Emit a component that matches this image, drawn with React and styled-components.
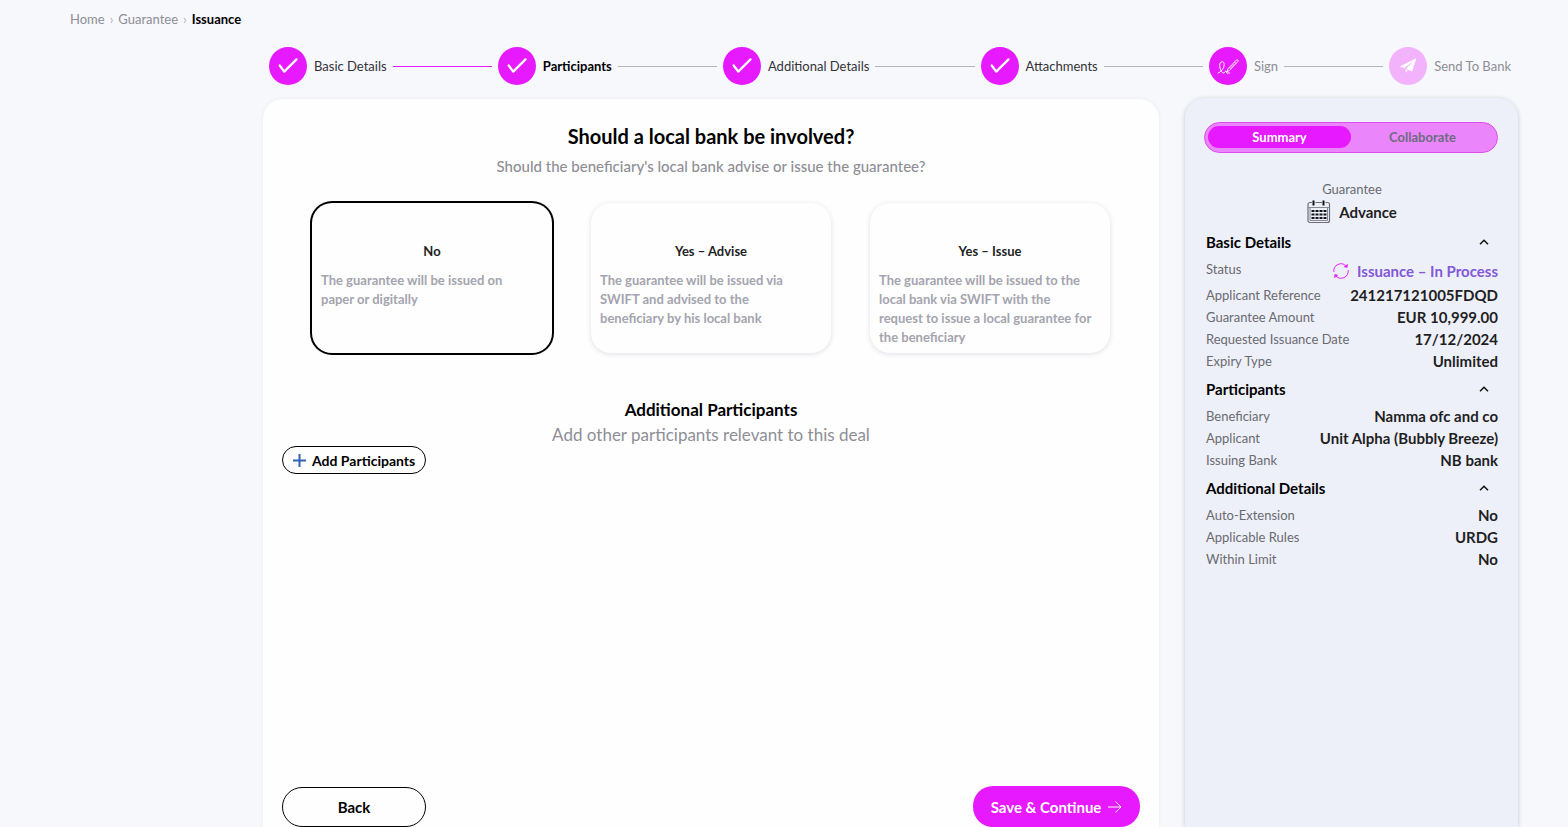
import React, { useState } from "react";
import styled, { createGlobalStyle, css } from "styled-components";

const STEPS = [
  { label: "Basic Details", icon: "check", state: "done" },
  { label: "Participants", icon: "check", state: "current" },
  { label: "Additional Details", icon: "check", state: "open" },
  { label: "Attachments", icon: "check", state: "open" },
  { label: "Sign", icon: "sign", state: "muted" },
  { label: "Send To Bank", icon: "send", state: "disabled" },
];

const OPTIONS = [
  { id: "no", title: "No", text: "The guarantee will be issued on paper or digitally" },
  {
    id: "advise",
    title: "Yes – Advise",
    text: "The guarantee will be issued via SWIFT and advised to the beneficiary by his local bank",
  },
  {
    id: "issue",
    title: "Yes – Issue",
    text: "The guarantee will be issued to the local bank via SWIFT with the request to issue a local guarantee for the beneficiary",
  },
];

const SECTIONS = [
  {
    title: "Basic Details",
    rows: [
      { label: "Status", value: "Issuance – In Process", status: true },
      { label: "Applicant Reference", value: "241217121005FDQD" },
      { label: "Guarantee Amount", value: "EUR 10,999.00" },
      { label: "Requested Issuance Date", value: "17/12/2024" },
      { label: "Expiry Type", value: "Unlimited" },
    ],
  },
  {
    title: "Participants",
    rows: [
      { label: "Beneficiary", value: "Namma ofc and co" },
      { label: "Applicant", value: "Unit Alpha (Bubbly Breeze)" },
      { label: "Issuing Bank", value: "NB bank" },
    ],
  },
  {
    title: "Additional Details",
    rows: [
      { label: "Auto-Extension", value: "No" },
      { label: "Applicable Rules", value: "URDG" },
      { label: "Within Limit", value: "No" },
    ],
  },
];

const StepIcon = ({ name }) => (
  <svg width="38" height="38" viewBox="0 0 38 38" fill="none" stroke="#ffffff" aria-hidden="true">
    {name === "check" && (
      <path d="M10.700 18.500 15.200 24.600 27.500 12.400" strokeWidth="2.300" strokeLinecap="round" strokeLinejoin="round" />
    )}
    {name === "sign" && (
      <g strokeLinecap="round" strokeLinejoin="round">
        <path d="M9.200 26c2.800-.8 6-5 6-8.400 0-1.800-.7-2.800-2-2.800-1.700 0-2.500 1.600-2.500 3.600 0 3 1.800 7.600 4 7.600 1.300 0 1.300-2 2.100-2 .7 0 .3 2 1.300 2h2.400" />
        <path d="m18 24.700.8-2.700 8.700-9c.8-.8 2.200.5 1.500 1.400L20.500 23.500 18 24.700Z" strokeWidth="0.900" />
        <path d="m25.600 14.900 1.500 1.400M21 21.600l4.500-4.700" strokeWidth="0.700" />
      </g>
    )}
    {name === "send" && (
      <g fill="#ffffff" stroke="none">
        <path d="M27.300 11.200 10.700 19.600l4.700 1.500 9.200-7.300-7.700 8.100 6.200 2.500Z" />
        <path d="m16.200 22.600 2.400 1-1.500 2.200Z" />
      </g>
    )}
  </svg>
);

const CalendarIcon = () => (
  <svg width="24" height="24" viewBox="0 0 24 24" fill="none" aria-hidden="true">
    <rect x="1" y="2.500" width="21.500" height="20" rx="2" stroke="#6f6d7c" strokeWidth="1.200" />
    <path d="M1 7.500h21.500M3 20.500h17.500M3 8v12.500M20.500 8v12.500" stroke="#8a8996" />
    <path d="M5 2.500h3.500M15 2.500h3.500" stroke="#eef0f9" strokeWidth="2" />
    <path d="M6.500.5v5M16.500.5v5" stroke="#111111" strokeWidth="2" />
    <path d="M4.500 11h15M4.500 14.500h15M4.500 18h15" stroke="#16151f" strokeWidth="2" strokeDasharray="3 1" />
  </svg>
);

const StatusIcon = () => (
  <svg width="16" height="16" viewBox="0 0 16 16" fill="none" stroke="#e619ff" strokeLinecap="round" aria-hidden="true">
    <path d="M.8 8.500A7.200 7.200 0 0 1 13.200 3M15.200 7.500A7.200 7.200 0 0 1 2.800 13" />
    <path d="m14.600 1.600-.4 2.900-2.900-.6ZM1.400 14.400l.4-2.900 2.900.6Z" fill="#e619ff" strokeWidth="0.500" />
  </svg>
);

const Chevron = () => (
  <svg width="10" height="8" viewBox="0 0 10 8" fill="none" stroke="#111111" strokeWidth="1.500" aria-hidden="true">
    <path d="M1 6.200 5 2.200 9 6.200" />
  </svg>
);

const Section = ({ title, rows }) => {
  const [isOpen, setIsOpen] = useState(true);
  return (
    <section>
      <SectionToggle type="button" aria-expanded={isOpen} onClick={() => setIsOpen(!isOpen)}>
        {title}
        <Chevron />
      </SectionToggle>
      {isOpen && (
        <Details>
          {rows.map(({ label, value, status }) => (
            <DetailRow key={label} $tall={status}>
              <DetailLabel>{label}</DetailLabel>
              <DetailValue $status={status}>
                {status && <StatusIcon />}
                {value}
              </DetailValue>
            </DetailRow>
          ))}
        </Details>
      )}
    </section>
  );
};

const App = () => {
  const [selected, setSelected] = useState("no");
  const [tab, setTab] = useState("Summary");

  return (
    <Page>
      <GlobalStyle />
      <Breadcrumbs aria-label="Breadcrumb">
        <Crumb href="#home">Home</Crumb>
        <Separator>›</Separator>
        <Crumb href="#guarantee">Guarantee</Crumb>
        <Separator>›</Separator>
        <CurrentCrumb>Issuance</CurrentCrumb>
      </Breadcrumbs>

      <Stepper>
        {STEPS.map(({ label, icon, state }, i) => (
          <Step key={label} $last={i === STEPS.length - 1}>
            <StepCircle $disabled={state === "disabled"}>
              <StepIcon name={icon} />
            </StepCircle>
            <StepLabel $state={state}>{label}</StepLabel>
            {i < STEPS.length - 1 && <StepLine $done={state === "done"} />}
          </Step>
        ))}
      </Stepper>

      <Content>
        <Panel>
          <Title>Should a local bank be involved?</Title>
          <Subtitle>Should the beneficiary's local bank advise or issue the guarantee?</Subtitle>
          <Options role="radiogroup" aria-label="Should a local bank be involved?">
            {OPTIONS.map(({ id, title, text }) => (
              <Option key={id} $selected={selected === id}>
                <HiddenRadio
                  type="radio"
                  name="localBank"
                  value={id}
                  checked={selected === id}
                  onChange={() => setSelected(id)}
                />
                <OptionTitle>{title}</OptionTitle>
                <OptionText>{text}</OptionText>
              </Option>
            ))}
          </Options>
          <Heading>Additional Participants</Heading>
          <HeadingText>Add other participants relevant to this deal</HeadingText>
          <AddButton type="button">
            <svg width="13" height="13" viewBox="0 0 13 13" stroke="#2f62b5" strokeWidth="2" aria-hidden="true">
              <path d="M6.500 0v13M0 6.500h13" />
            </svg>
            Add Participants
          </AddButton>
          <Footer>
            <BackButton type="button">Back</BackButton>
            <SaveButton type="button">
              Save &amp; Continue
              <svg width="14" height="14" viewBox="0 0 14 14" fill="none" stroke="#ffffff" aria-hidden="true">
                <path d="M0 7h13M7.500 1.500 13 7l-5.500 5.500" />
              </svg>
            </SaveButton>
          </Footer>
        </Panel>

        <Aside>
          <Tabs role="tablist">
            {["Summary", "Collaborate"].map((name) => (
              <Tab key={name} type="button" role="tab" aria-selected={tab === name} $active={tab === name} onClick={() => setTab(name)}>
                {name}
              </Tab>
            ))}
          </Tabs>
          <ProductType>Guarantee</ProductType>
          <ProductName>
            <CalendarIcon />
            Advance
          </ProductName>
          {SECTIONS.map((section) => (
            <Section key={section.title} {...section} />
          ))}
        </Aside>
      </Content>
    </Page>
  );
};

export default App;

const GlobalStyle = createGlobalStyle`
  * {
    box-sizing: border-box;
  }
  body {
    margin: 0;
    background: #f7f8fc;
    font-family: Lato, sans-serif;
    font-size: 13px;
    color: #1f1f24;
  }
  button {
    padding: 0;
    border: none;
    background: none;
    font-family: inherit;
    color: inherit;
    cursor: pointer;
  }
  svg {
    display: block;
    flex-shrink: 0;
  }
`;

const Page = styled.div`
  min-height: 100vh;
  display: flex;
  flex-direction: column;
`;

const Breadcrumbs = styled.nav`
  display: flex;
  align-items: center;
  gap: 5px;
  padding: 9px 70px 0;
  line-height: 20px;
`;

const Crumb = styled.a`
  color: #8e8e96;
  text-decoration: none;
`;

const Separator = styled.span`
  color: #b4b4bc;
`;

const CurrentCrumb = styled.span`
  font-weight: 700;
  color: #000000;
`;

const Stepper = styled.ol`
  display: flex;
  margin: 18px 57px 0 269px;
  padding: 0;
  list-style: none;
`;

const Step = styled.li`
  display: flex;
  align-items: center;
  flex: ${({ $last }) => ($last ? "none" : "1 1 auto")};
`;

const StepCircle = styled.span`
  width: 38px;
  height: 38px;
  flex-shrink: 0;
  border-radius: 50%;
  background: ${({ $disabled }) => ($disabled ? "#f2b3fc" : "#e619ff")};
`;

const stepColors = {
  done: "#333338",
  open: "#333338",
  current: "#000000",
  muted: "#8e8e96",
  disabled: "#8e8e96",
};

const StepLabel = styled.span`
  margin-left: 7px;
  white-space: nowrap;
  font-weight: ${({ $state }) => ($state === "current" ? 700 : 400)};
  color: ${({ $state }) => stepColors[$state]};
`;

const StepLine = styled.span`
  flex: 1;
  height: 1px;
  margin: 0 6px;
  background: ${({ $done }) => ($done ? "#e619ff" : "#b4b4bb")};
`;

const Content = styled.div`
  flex: 1;
  display: flex;
  gap: 26px;
  padding: 13px 50px 0 263px;
`;

const Panel = styled.main`
  flex: 1;
  min-width: 0;
  display: flex;
  flex-direction: column;
  margin-top: 1px;
  padding: 25px 19px 0;
  border-radius: 20px 20px 0 0;
  background: #fefefe;
  box-shadow: 0 0 4px rgba(40, 40, 90, 0.06);
`;

const Title = styled.h1`
  margin: 0;
  font-size: 20px;
  line-height: 24px;
  font-weight: 700;
  text-align: center;
  color: #000000;
`;

const Subtitle = styled.p`
  margin: 8px 0 0;
  font-size: 15px;
  line-height: 20px;
  font-weight: 500;
  text-align: center;
  color: #8e8e96;
`;

const Options = styled.div`
  display: grid;
  grid-template-columns: repeat(3, 1fr);
  gap: 39px;
  margin: 27px 30px 0;
`;

const Option = styled.label`
  min-height: 150px;
  padding: 38px 9px 5px;
  border-radius: 20px;
  cursor: pointer;
  box-shadow: ${({ $selected }) => ($selected ? "0 0 0 2px #000000" : "0 1px 5px rgba(60, 60, 120, 0.16)")};
`;

const HiddenRadio = styled.input`
  position: absolute;
  opacity: 0;
  pointer-events: none;
`;

const OptionTitle = styled.span`
  display: block;
  line-height: 20px;
  font-weight: 700;
  text-align: center;
`;

const OptionText = styled.span`
  display: block;
  margin: 10px 7px 0 0;
  line-height: 19px;
  font-weight: 700;
  color: #a4a4af;
`;

const Heading = styled.h2`
  margin: 46px 0 0;
  font-size: 17px;
  line-height: 22px;
  font-weight: 700;
  text-align: center;
  color: #000000;
`;

const HeadingText = styled.p`
  margin: 3px 0 0;
  font-size: 17px;
  line-height: 22px;
  text-align: center;
  color: #8e8e96;
`;

const AddButton = styled.button`
  && {
    align-self: flex-start;
    display: flex;
    align-items: center;
    gap: 6px;
    height: 28px;
    padding: 0 10px;
    border: 1px solid #000000;
    border-radius: 14px;
    font-size: 14px;
    font-weight: 700;
    color: #000000;
  }
`;

const Footer = styled.div`
  display: flex;
  justify-content: space-between;
  align-items: flex-end;
  margin-top: auto;
`;

const buttonBase = css`
  height: 40px;
  border-radius: 20px;
  font-size: 15px;
  font-weight: 700;
`;

const BackButton = styled.button`
  && {
    ${buttonBase}
    width: 144px;
    border: 1px solid #000000;
    color: #000000;
  }
`;

const SaveButton = styled.button`
  && {
    ${buttonBase}
    display: flex;
    align-items: center;
    justify-content: center;
    gap: 7px;
    width: 167px;
    height: 41px;
    background: #e619ff;
    color: #ffffff;
  }
`;

const Aside = styled.aside`
  width: 333px;
  flex-shrink: 0;
  padding: 24px 20px 0 21px;
  border-radius: 20px 20px 0 0;
  background: #eef0f9;
  box-shadow: 0 1px 5px rgba(0, 0, 0, 0.2);
`;

const Tabs = styled.div`
  display: flex;
  height: 31px;
  margin: 0 0 27px -2px;
  padding: 3px;
  border: 1px solid #dd4df2;
  border-radius: 16px;
  background: #eb85fb;
`;

const Tab = styled.button`
  && {
    flex: 1;
    height: 22px;
    border-radius: 11px;
    font-size: 13px;
    font-weight: 700;
    background: ${({ $active }) => ($active ? "#e619ff" : "transparent")};
    color: ${({ $active }) => ($active ? "#ffffff" : "#6c6c80")};
  }
`;

const ProductType = styled.div`
  line-height: 18px;
  text-align: center;
  color: #6a6a70;
`;

const ProductName = styled.div`
  display: flex;
  align-items: center;
  justify-content: center;
  gap: 8px;
  height: 27px;
  font-size: 15px;
  font-weight: 700;
`;

const SectionToggle = styled.button`
  && {
    display: flex;
    align-items: center;
    justify-content: space-between;
    width: 100%;
    height: 33px;
    padding-right: 9px;
    font-size: 15px;
    font-weight: 700;
    color: #000000;
  }
`;

const Details = styled.dl`
  margin: 0;
`;

const DetailRow = styled.div`
  display: flex;
  justify-content: space-between;
  height: ${({ $tall }) => ($tall ? 26 : 22)}px;
  line-height: 22px;
  color: #6a6a70;
`;

const DetailLabel = styled.dt`
  margin: 0;
`;

const DetailValue = styled.dd`
  display: flex;
  align-items: center;
  gap: 8px;
  margin: 0;
  font-size: 15px;
  font-weight: 700;
  color: ${({ $status }) => ($status ? "#8358d8" : "#1f1f24")};
`;
